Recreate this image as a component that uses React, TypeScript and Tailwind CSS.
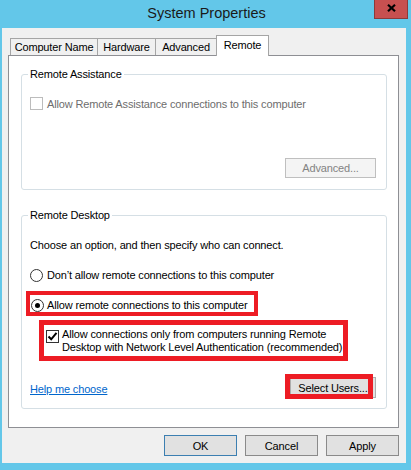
import React from "react";

function Tab({ w, label, first }: { w: string; label: string; first?: boolean }) {
  return (
    <div
      className={`${w} ${first ? "" : "-ml-px"} h-[17px] bg-[#f0f0f0] border border-b-0 border-[#a5a5a5] flex items-center justify-center text-black`}
    >
      {label}
    </div>
  );
}

function Checkbox({ checked, disabled }: { checked?: boolean; disabled?: boolean }) {
  return (
    <div
      className={`w-[13px] h-[13px] shrink-0 bg-white border ${disabled ? "border-[#bcbcbc]" : "border-[#333333]"} flex items-center justify-center`}
    >
      {checked && (
        <svg width="11" height="11" viewBox="0 0 11 11">
          <path d="M1.5 5.5 L4.2 8.3 L9.5 1.8" fill="none" stroke="#000" strokeWidth="2" />
        </svg>
      )}
    </div>
  );
}

function Radio({ checked }: { checked?: boolean }) {
  return (
    <div className="w-[13px] h-[13px] shrink-0 rounded-full bg-white border border-[#333333] flex items-center justify-center">
      {checked && <div className="w-[5px] h-[5px] rounded-full bg-black" />}
    </div>
  );
}

export default function App() {
  return (
    <div className="w-[411px] h-[470px] bg-[#63c7e9] flex flex-col font-['Liberation_Sans',Arial,sans-serif] text-[11px] tracking-[-0.15px] leading-[14px] text-black overflow-hidden">
      {/* Title bar */}
      <div className="h-[28px] grid grid-cols-[1fr_auto_1fr] items-start">
        <div />
        <div className="h-[26px] flex items-center text-[14.5px] tracking-[0px] text-[#1a1a1a] pl-[2px]">
          System Properties
        </div>
        <div className="flex justify-end pr-[3px]">
          <div className="w-[34px] h-[19px] bg-[#c75050] border border-t-0 border-[#8c3a3a] flex items-start justify-center pt-[4px]">
            <svg width="9" height="8" viewBox="0 0 9 8">
              <path d="M1 0.8 L8 7.2 M8 0.8 L1 7.2" stroke="#000" strokeWidth="2.2" />
            </svg>
          </div>
        </div>
      </div>

      {/* Client area */}
      <div className="ml-[2px] mr-[5px] h-[435px] bg-[#f0f0f0] pt-[7px] flex flex-col">
        {/* Tabs */}
        <div className="h-[20px] flex items-end pl-[8px]">
          <Tab w="w-[88px]" label="Computer Name" first />
          <Tab w="w-[59px]" label="Hardware" />
          <Tab w="w-[62px]" label="Advanced" />
          <div className="-ml-px w-[53px] h-[21px] -mb-px relative z-10 bg-white border border-b-0 border-[#a5a5a5] flex items-center justify-center pb-[2px]">
            Remote
          </div>
        </div>

        {/* Panel */}
        <div className="ml-[6px] w-[391px] h-[373px] bg-white border border-[#8e8f94] flex flex-col">
          {/* Remote Assistance group */}
          <div className="relative mt-[18px] ml-[12px] w-[366px] h-[116px] border border-[#d5dfe5] rounded-[3px] flex flex-col">
            <span className="absolute -top-[8px] left-[6px] bg-white px-[2px]">Remote Assistance</span>
            <div className="mt-[22px] ml-[8px] flex items-center gap-[4px] h-[13px]">
              <Checkbox disabled />
              <span className="text-[#6d6d6d]">Allow Remote Assistance connections to this computer</span>
            </div>
            <div className="mt-auto mb-[11px] mr-[10px] self-end w-[91px] h-[20px] bg-[#f4f4f4] border border-[#bfbfbf] flex items-center justify-center text-[#838383]">
              Advanced...
            </div>
          </div>

          {/* Remote Desktop group */}
          <div className="relative mt-[25px] ml-[12px] w-[366px] h-[194px] border border-[#d5dfe5] rounded-[3px] flex flex-col">
            <span className="absolute -top-[8px] left-[6px] bg-white px-[2px]">Remote Desktop</span>
            <div className="mt-[22px] ml-[8px] h-[14px]">Choose an option, and then specify who can connect.</div>
            <div className="mt-[16px] ml-[8px] h-[14px] flex items-center gap-[4px]">
              <Radio />
              <span>Don&#8217;t allow remote connections to this computer</span>
            </div>
            <div className="mt-[9px] ml-[4px] w-[232px] h-[25px] border-[4px] border-[#ed1c24] pl-[1px] pt-[3px]">
              <div className="h-[14px] flex items-center gap-[3px]">
                <Radio checked />
                <span>Allow remote connections to this computer</span>
              </div>
            </div>
            <div className="mt-[4px] ml-[17px] w-[309px] h-[41px] border-[5px] border-[#ed1c24] pl-[2px] pt-[3px] flex items-start gap-[3px] leading-[13px]">
              <div className="mt-[2px]">
                <Checkbox checked />
              </div>
              <div>
                <div>Allow connections only from computers running Remote</div>
                <div>Desktop with Network Level Authentication (recommended)</div>
              </div>
            </div>
            <div className="mt-[16px] flex items-center justify-between h-[21px]">
              <span className="ml-[8px] mt-[3px] text-[#0066cc] underline">Help me choose</span>
              <div className="relative mr-[10px] w-[86px] h-[21px] bg-[#e1e1e1] border border-[#adadad] flex items-center justify-center">
                Select Users...
                <div className="absolute -left-[6px] -top-[4px] w-[88px] h-[25px] border-[5px] border-[#ed1c24]" />
              </div>
            </div>
          </div>
        </div>

        {/* Bottom buttons */}
        <div className="mt-[7px] ml-[162px] flex gap-[8px]">
          <div className="w-[73px] h-[21px] bg-[#e1e1e1] border border-[#3c7fb1] flex items-center justify-center">
            OK
          </div>
          <div className="w-[73px] h-[21px] bg-[#e1e1e1] border border-[#8a8a8a] flex items-center justify-center">
            Cancel
          </div>
          <div className="w-[73px] h-[21px] bg-[#e1e1e1] border border-[#8a8a8a] flex items-center justify-center">
            Apply
          </div>
        </div>
      </div>
    </div>
  );
}
